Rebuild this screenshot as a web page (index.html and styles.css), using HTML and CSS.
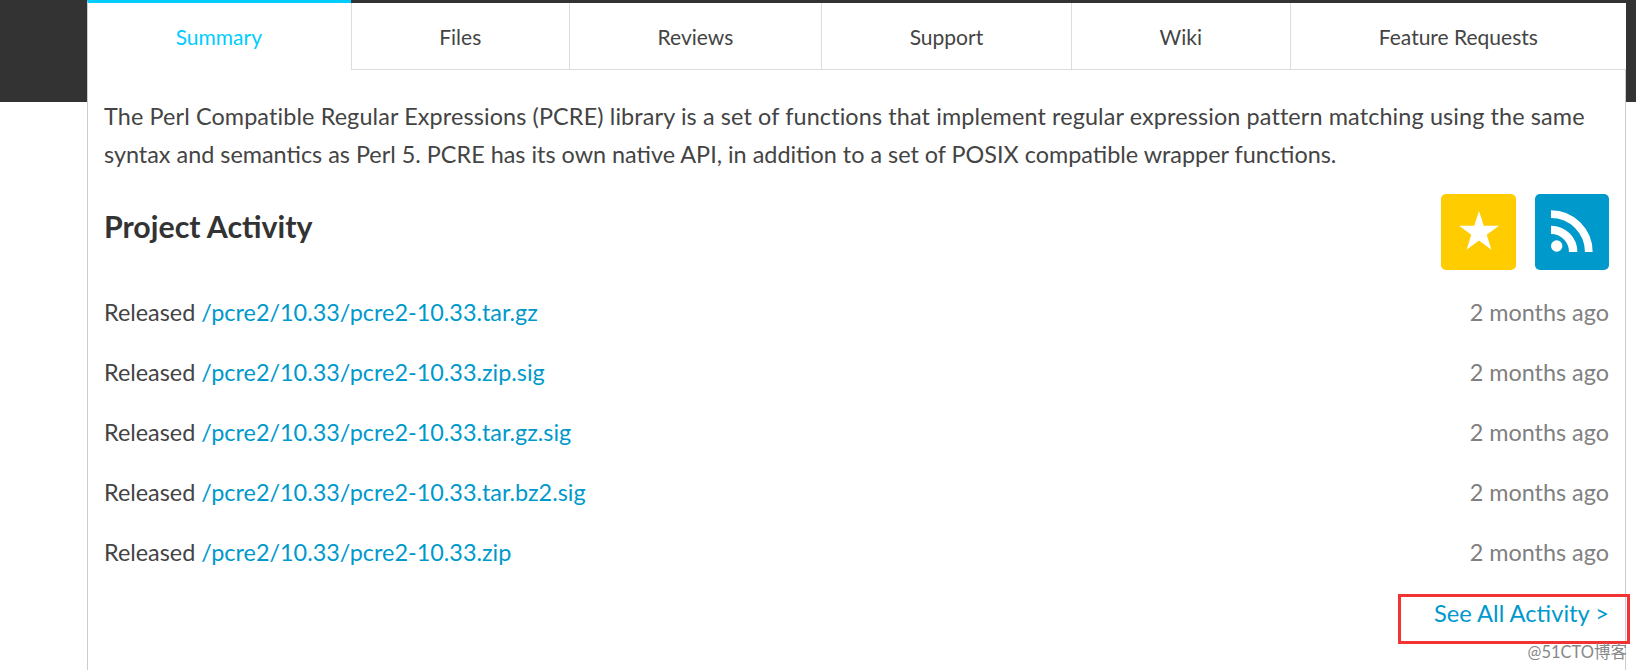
FILE: index.html
```html
<!DOCTYPE html>
<html lang="en">

<head>
    <meta charset="UTF-8">
    <title>PCRE Summary</title>
    <link rel="stylesheet" href="styles.css">
</head>

<body>
    <div class="header-band"></div>
    <div class="container">
        <nav class="tabs">
            <a class="tab active" href="#">Summary</a>
            <a class="tab" href="#">Files</a>
            <a class="tab" href="#">Reviews</a>
            <a class="tab" href="#">Support</a>
            <a class="tab" href="#">Wiki</a>
            <a class="tab" href="#">Feature Requests</a>
        </nav>

        <div class="content">
            <p class="description">The Perl Compatible Regular Expressions (PCRE) library is a set of functions that implement regular expression pattern matching using the same syntax and semantics as Perl 5. PCRE has its own native API, in addition to a set of POSIX compatible wrapper functions.</p>

            <div class="activity-head">
                <h2>Project Activity</h2>
                <div class="icon-buttons">
                    <a class="icon-btn star" href="#">
                        <svg width="42" height="42" viewBox="0 0 42 42">
                            <path fill="#fff" d="M21 1l4.800 14.700H41L28.700 24.800l4.700 15L21 30.500 8.600 39.800l4.700-15L1 15.700h15.200z"/>
                        </svg>
                    </a>
                    <a class="icon-btn rss" href="#">
                        <svg width="42" height="42" viewBox="0 0 42 42">
                            <circle cx="5.700" cy="36" r="5.700" fill="#fff"/>
                            <path fill="none" stroke="#fff" stroke-width="8.300" d="M0 19.800A22.200 22.200 0 0 1 22.200 42"/>
                            <path fill="none" stroke="#fff" stroke-width="7.700" d="M0 4.200A37.800 37.800 0 0 1 37.800 42"/>
                        </svg>
                    </a>
                </div>
            </div>

            <ul class="activity-list">
                <li><span>Released <a href="#">/pcre2/10.33/pcre2-10.33.tar.gz</a></span><span class="when">2 months ago</span></li>
                <li><span>Released <a href="#">/pcre2/10.33/pcre2-10.33.zip.sig</a></span><span class="when">2 months ago</span></li>
                <li><span>Released <a href="#">/pcre2/10.33/pcre2-10.33.tar.gz.sig</a></span><span class="when">2 months ago</span></li>
                <li><span>Released <a href="#">/pcre2/10.33/pcre2-10.33.tar.bz2.sig</a></span><span class="when">2 months ago</span></li>
                <li><span>Released <a href="#">/pcre2/10.33/pcre2-10.33.zip</a></span><span class="when">2 months ago</span></li>
            </ul>

            <div class="see-all"><a href="#">See All Activity &gt;</a></div>
        </div>
    </div>

    <div class="highlight-box"></div>
    <div class="watermark">@51CTO博客</div>
</body>

</html>
```

FILE: styles.css
```css
html,
body {
    height: 670px;
    overflow: hidden;
}

body {
    margin: 0;
    position: relative;
    background: #fff;
    color: #333;
    font-family: Lato, "Noto Sans CJK SC", sans-serif;
}

a {
    color: #0099cc;
    text-decoration: none;
}

.header-band {
    position: absolute;
    top: 0;
    left: 0;
    right: 0;
    height: 102px;
    background: #333;
}

.container {
    position: relative;
    box-sizing: border-box;
    width: 1539px;
    height: 670px;
    margin-left: 87px;
    padding-top: 3px;
    background: #fff;
    border-left: 1px solid #ccc;
    border-right: 1px solid #ccc;
}

.tabs {
    display: flex;
    height: 67px;
    margin-top: -3px;
    padding-top: 3px;
    background: #333;
    margin-left: -1px;
    margin-right: -1px;
}

.tab {
    box-sizing: border-box;
    padding: 0 87.700px;
    height: 67px;
    line-height: 68px;
    font-size: 21px;
    color: #444;
    background: #fff;
    border-left: 1px solid #ddd;
    border-bottom: 1px solid #ddd;
    white-space: nowrap;
}

.tab:last-child {
    flex: 1;
    text-align: center;
    padding: 0;
}

.tab.active {
    color: #00ccff;
    border-left: 1px solid #ccc;
    border-bottom: 0;
    margin-top: -3px;
    height: 70px;
    padding-right: 88.500px;
    border-top: 3px solid #00ccff;
    line-height: 68px;
}

.content {
    padding: 0 16px;
}

.description {
    margin: 28px 0 0;
    font-size: 23.400px;
    line-height: 37.500px;
    color: #444;
}

.description::first-line {
    letter-spacing: 0.120px;
}

.activity-head {
    display: flex;
    justify-content: space-between;
    margin-top: 21px;
}

.activity-head h2 {
    margin: 0;
    font-size: 30.300px;
    font-weight: 700;
    line-height: 38px;
    padding-top: 13px;
    color: #333;
}

.icon-buttons {
    display: flex;
    gap: 19px;
}

.icon-btn {
    display: flex;
    align-items: center;
    justify-content: center;
    box-sizing: border-box;
    height: 76px;
    padding-bottom: 2px;
    border-radius: 5px;
}

.icon-btn.star {
    width: 75px;
    background: #ffcc00;
}

.icon-btn.rss {
    width: 74px;
    background: #0099cc;
}

.activity-list {
    list-style: none;
    margin: 12px 0 0;
    padding: 0;
}

.activity-list li {
    display: flex;
    justify-content: space-between;
    height: 60px;
    line-height: 60px;
    font-size: 23.400px;
    color: #444;
}

.when {
    color: #808080;
}

.see-all {
    text-align: right;
    font-size: 23.700px;
    line-height: 60px;
    padding-top: 1px;
}

.highlight-box {
    position: absolute;
    left: 1398px;
    top: 594px;
    width: 232px;
    height: 50px;
    box-sizing: border-box;
    border: 3px solid #f23333;
}

.watermark {
    position: absolute;
    right: 9px;
    top: 641px;
    font-size: 16.500px;
    line-height: 22px;
    color: #888;
}
```
